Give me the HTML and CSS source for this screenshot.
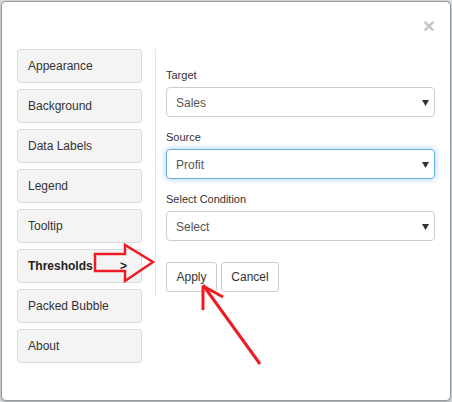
FILE: index.html
```html
<!DOCTYPE html>
<html>
<head>
<meta charset="utf-8">
<link rel="stylesheet" href="styles.css">
</head>
<body>
<div class="modal">
  <div class="modal-header"><span class="close">&times;</span></div>
  <div class="modal-body">
    <div class="menu">
      <div class="menu-item">Appearance</div>
      <div class="menu-item">Background</div>
      <div class="menu-item">Data Labels</div>
      <div class="menu-item">Legend</div>
      <div class="menu-item">Tooltip</div>
      <div class="menu-item active"><span>Thresholds</span><span>&gt;</span></div>
      <div class="menu-item">Packed Bubble</div>
      <div class="menu-item">About</div>
    </div>
    <div class="panel">
      <div class="field">
        <div class="label">Target</div>
        <div class="select"><span>Sales</span><svg class="caret" width="7" height="6" viewBox="0 0 7 6"><path d="M0 0H7L3.5 6Z"/></svg></div>
      </div>
      <div class="field">
        <div class="label">Source</div>
        <div class="select focus"><span>Profit</span><svg class="caret" width="7" height="6" viewBox="0 0 7 6"><path d="M0 0H7L3.5 6Z"/></svg></div>
      </div>
      <div class="field">
        <div class="label">Select Condition</div>
        <div class="select"><span>Select</span><svg class="caret" width="7" height="6" viewBox="0 0 7 6"><path d="M0 0H7L3.5 6Z"/></svg></div>
      </div>
      <div class="actions">
        <div class="btn apply">Apply</div>
        <div class="btn cancel">Cancel</div>
      </div>
    </div>
  </div>
  <svg class="annot" width="452" height="402" viewBox="0 0 452 402">
    <polygon points="95,254 125,254 125,245 153,262 125,281 125,271 95,271" fill="none" stroke="#ed1c24" stroke-width="2.5" stroke-linejoin="miter"/>
    <g stroke="#ed1c24" stroke-width="3" fill="none" stroke-linecap="butt">
      <line x1="260" y1="364" x2="203" y2="285"/>
      <line x1="203" y1="286" x2="203" y2="310"/>
      <line x1="203" y1="286" x2="223" y2="297"/>
    </g>
  </svg>
</div>
</body>
</html>
```

FILE: styles.css
```css
html, body {
  margin: 0;
  padding: 0;
}
body {
  width: 452px;
  height: 402px;
  background: #d9dde0;
  padding: 1px 1px 1px 1px;
  box-sizing: border-box;
  font-family: "Liberation Sans", Arial, sans-serif;
  color: #333;
  overflow: hidden;
}
.modal {
  position: relative;
  width: 450px;
  height: 400px;
  box-sizing: border-box;
  background: #fff;
  border: 1px solid #9a9a9a;
  border-radius: 5px;
  box-shadow: 0 1px 3px rgba(0,0,0,0.3);
  padding: 0 15px 0 15px;
}
.modal-header {
  height: 47px;
  display: flex;
  justify-content: flex-end;
  align-items: center;
}
.close {
  font-size: 21px;
  font-weight: bold;
  line-height: 1;
  color: #c4c4c4;
  margin-right: 0;
  margin-top: 0;
}
.modal-body {
  display: flex;
  align-items: flex-start;
}
.menu {
  width: 125px;
  display: flex;
  flex-direction: column;
  gap: 6px;
}
.menu-item {
  height: 34px;
  box-sizing: border-box;
  background: #f4f4f4;
  border: 1px solid #dcdcdc;
  border-radius: 3px;
  display: flex;
  align-items: center;
  justify-content: space-between;
  padding: 0 14px 0 10px;
  font-size: 12px;
  color: #333;
}
.menu-item.active {
  font-weight: bold;
  color: #222;
}
.panel {
  margin-left: 13px;
  border-left: 1px solid #e6e6e6;
  padding: 20px 0 4px 10px;
  flex: 1;
}
.field + .field {
  margin-top: 14px;
}
.label {
  font-size: 11px;
  line-height: 13px;
  margin-bottom: 5px;
  color: #333;
}
.select {
  height: 30px;
  box-sizing: border-box;
  border: 1px solid #cccccc;
  border-radius: 4px;
  display: flex;
  align-items: center;
  justify-content: space-between;
  padding: 1px 5px 0 9px;
  font-size: 12px;
  color: #555;
}
.select.focus {
  border-color: #66afe9;
  box-shadow: 0 0 6px rgba(102,175,233,0.6);
}
.caret {
  fill: #333;
  margin-top: 0;
}
.actions {
  margin-top: 21px;
  display: flex;
  gap: 4px;
}
.btn {
  height: 30px;
  box-sizing: border-box;
  border: 1px solid #cccccc;
  border-radius: 3px;
  background: #fff;
  display: flex;
  align-items: center;
  justify-content: center;
  font-size: 12px;
  color: #333;
}
.btn.apply { width: 51px; }
.btn.cancel { width: 58px; }
.annot {
  position: absolute;
  left: -2px;
  top: -2px;
  pointer-events: none;
}
```
